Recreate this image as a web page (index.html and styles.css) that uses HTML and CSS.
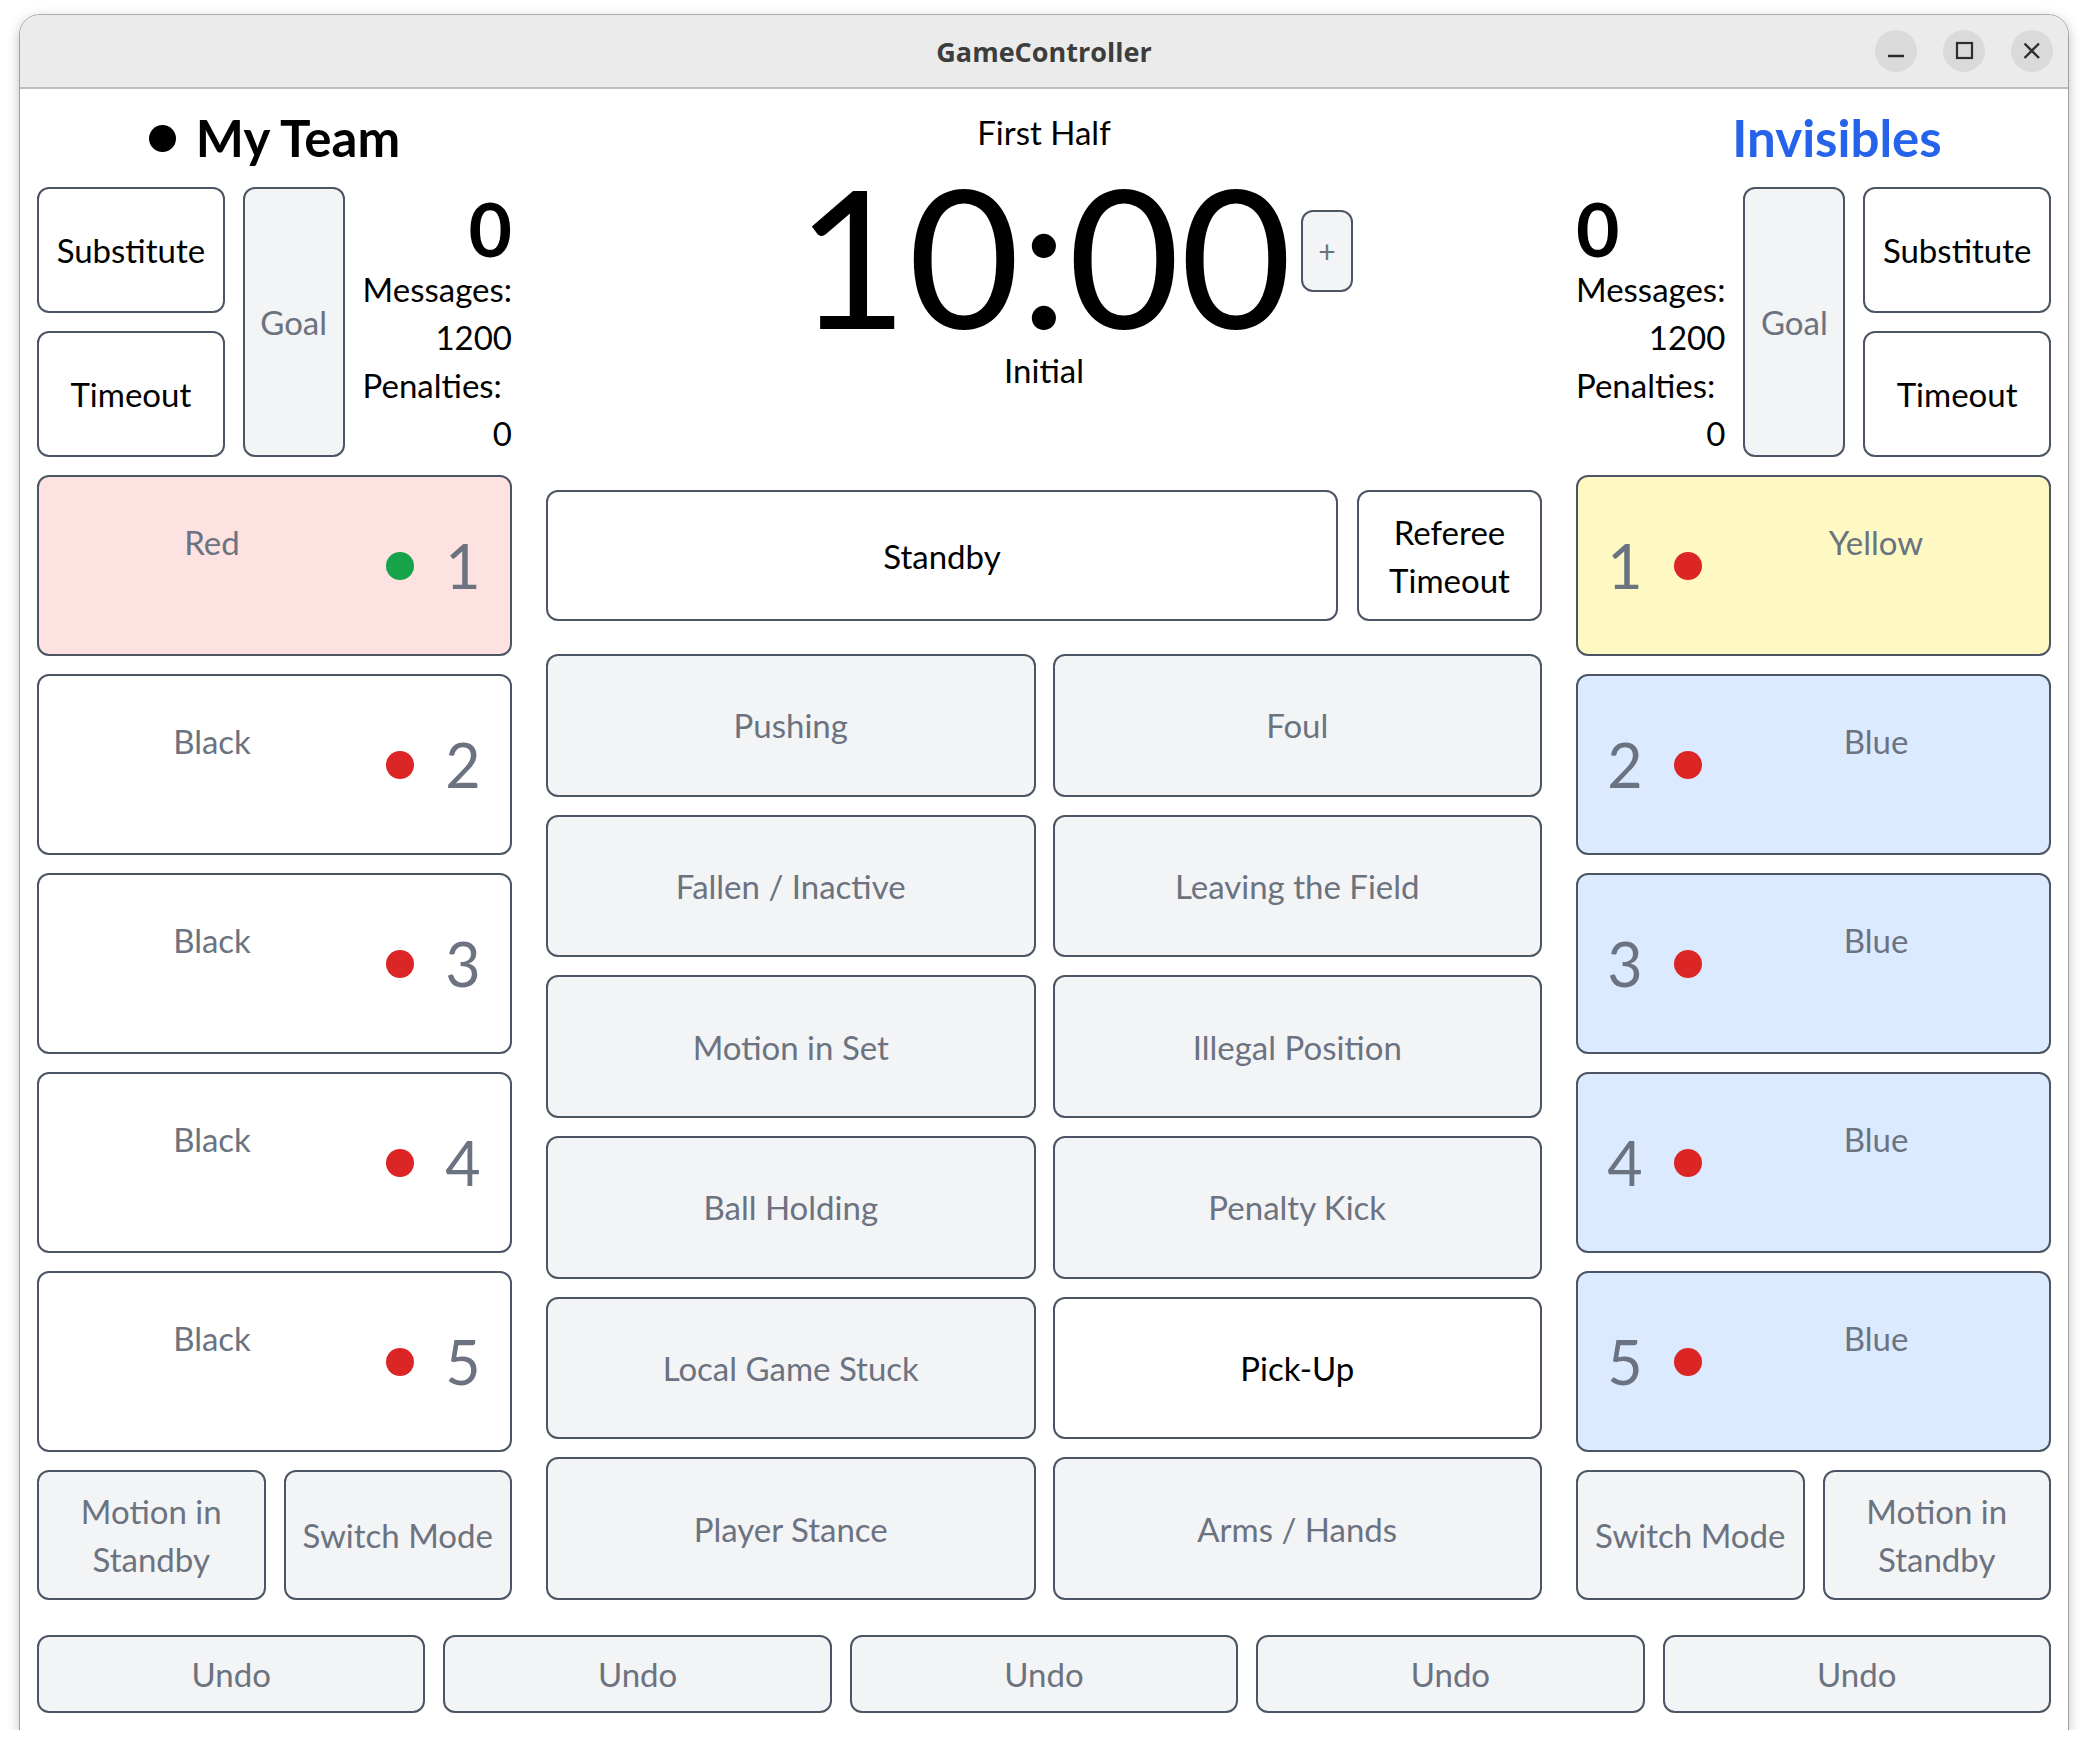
FILE: index.html
```
<!DOCTYPE html>
<html lang="en">
<head>
<meta charset="utf-8">
<title>GameController</title>
<link rel="stylesheet" href="styles.css">
</head>
<body>
<div class="window">
  <header class="titlebar">
    <div class="title">GameController</div>
    <div class="controls">
      <span class="ctl"><svg width="42" height="42" viewBox="0 0 42 42"><line x1="13" y1="26" x2="29" y2="26" stroke="#2e2e2e" stroke-width="2.4"/></svg></span>
      <span class="ctl"><svg width="42" height="42" viewBox="0 0 42 42"><rect x="14" y="13" width="15" height="15" fill="none" stroke="#2e2e2e" stroke-width="2.2"/></svg></span>
      <span class="ctl"><svg width="42" height="42" viewBox="0 0 42 42"><path d="M13.5 13.5 L28 28 M28 13.5 L13.5 28" stroke="#2e2e2e" stroke-width="2.4" fill="none"/></svg></span>
    </div>
  </header>

  <main class="content">
    <div class="main">
      <section class="team team-left">
        <div class="team-name"><span class="team-dot"></span><span>My Team</span></div>
        <div class="team-top">
          <div class="side-btns">
            <div class="btn on">Substitute</div>
            <div class="btn on">Timeout</div>
          </div>
          <div class="btn off goal">Goal</div>
          <div class="stats">
            <div class="stats-inner">
              <div class="score">0</div>
              <div class="stat-label">Messages:</div>
              <div class="stat-value">1200</div>
              <div class="stat-label">Penalties:</div>
              <div class="stat-value">0</div>
            </div>
          </div>
        </div>
        <div class="players">
          <div class="player red"><div class="p-label"><span>Red</span><span>&nbsp;</span></div><span class="p-dot ok"></span><span class="p-num">1</span></div>
          <div class="player"><div class="p-label"><span>Black</span><span>&nbsp;</span></div><span class="p-dot bad"></span><span class="p-num">2</span></div>
          <div class="player"><div class="p-label"><span>Black</span><span>&nbsp;</span></div><span class="p-dot bad"></span><span class="p-num">3</span></div>
          <div class="player"><div class="p-label"><span>Black</span><span>&nbsp;</span></div><span class="p-dot bad"></span><span class="p-num">4</span></div>
          <div class="player"><div class="p-label"><span>Black</span><span>&nbsp;</span></div><span class="p-dot bad"></span><span class="p-num">5</span></div>
        </div>
        <div class="team-bottom">
          <div class="btn off">Motion in<br>Standby</div>
          <div class="btn off">Switch Mode</div>
        </div>
      </section>

      <section class="center">
        <div class="clock-area">
          <div class="half">First Half</div>
          <div class="clock-row">
            <div class="clock">10:00</div>
            <div class="btn off plus">+</div>
          </div>
          <div class="state">Initial</div>
        </div>
        <div class="standby-row">
          <div class="btn on standby">Standby</div>
          <div class="btn on ref-timeout">Referee<br>Timeout</div>
        </div>
        <div class="penalties">
          <div class="btn off">Pushing</div>
          <div class="btn off">Foul</div>
          <div class="btn off">Fallen / Inactive</div>
          <div class="btn off">Leaving the Field</div>
          <div class="btn off">Motion in Set</div>
          <div class="btn off">Illegal Position</div>
          <div class="btn off">Ball Holding</div>
          <div class="btn off">Penalty Kick</div>
          <div class="btn off">Local Game Stuck</div>
          <div class="btn on">Pick-Up</div>
          <div class="btn off">Player Stance</div>
          <div class="btn off">Arms / Hands</div>
        </div>
      </section>

      <section class="team team-right">
        <div class="team-name"><span class="team-dot"></span><span>Invisibles</span></div>
        <div class="team-top">
          <div class="stats">
            <div class="stats-inner">
              <div class="score">0</div>
              <div class="stat-label">Messages:</div>
              <div class="stat-value">1200</div>
              <div class="stat-label">Penalties:</div>
              <div class="stat-value">0</div>
            </div>
          </div>
          <div class="btn off goal">Goal</div>
          <div class="side-btns">
            <div class="btn on">Substitute</div>
            <div class="btn on">Timeout</div>
          </div>
        </div>
        <div class="players">
          <div class="player yellow"><span class="p-num">1</span><span class="p-dot bad"></span><div class="p-label"><span>Yellow</span><span>&nbsp;</span></div></div>
          <div class="player blue"><span class="p-num">2</span><span class="p-dot bad"></span><div class="p-label"><span>Blue</span><span>&nbsp;</span></div></div>
          <div class="player blue"><span class="p-num">3</span><span class="p-dot bad"></span><div class="p-label"><span>Blue</span><span>&nbsp;</span></div></div>
          <div class="player blue"><span class="p-num">4</span><span class="p-dot bad"></span><div class="p-label"><span>Blue</span><span>&nbsp;</span></div></div>
          <div class="player blue"><span class="p-num">5</span><span class="p-dot bad"></span><div class="p-label"><span>Blue</span><span>&nbsp;</span></div></div>
        </div>
        <div class="team-bottom">
          <div class="btn off">Switch Mode</div>
          <div class="btn off">Motion in<br>Standby</div>
        </div>
      </section>
    </div>

    <div class="undo-row">
      <div class="btn off">Undo</div>
      <div class="btn off">Undo</div>
      <div class="btn off">Undo</div>
      <div class="btn off">Undo</div>
      <div class="btn off">Undo</div>
    </div>
  </main>
</div>
</body>
</html>
```
FILE: styles.css
```
* { box-sizing: border-box; }

body {
  margin: 0;
  background: #ffffff;
  font-family: "Lato", "Noto Sans", sans-serif;
  color: #000;
}

.window {
  margin: 15px 0 0 20px;
  width: 2048px;
  height: 1715px;
  background: #fff;
  border-radius: 20px 20px 0 0;
  box-shadow: 0 0 0 1px rgba(0, 0, 0, 0.28), 0 4px 14px rgba(0, 0, 0, 0.28);
  display: flex;
  flex-direction: column;
  overflow: hidden;
}

/* title bar */
.titlebar {
  height: 74px;
  flex: none;
  background: #ebebeb;
  border-bottom: 2px solid #bdbdbd;
  display: grid;
  grid-template-columns: 1fr auto 1fr;
  align-items: center;
  padding: 0 15px;
}
.title {
  grid-column: 2;
  font-family: "Open Sans", "Lato", sans-serif;
  font-weight: 700;
  font-size: 27px;
  color: #3d3d3d;
}
.controls {
  grid-column: 3;
  justify-self: end;
  display: flex;
  gap: 26px;
}
.ctl {
  width: 42px;
  height: 42px;
  border-radius: 50%;
  background: #dadada;
  display: flex;
}

/* content */
.content {
  flex: 1;
  padding: 0 17px 17px;
  display: flex;
  flex-direction: column;
}
.main {
  flex: 1;
  display: grid;
  grid-template-columns: 475px 1fr 475px;
  column-gap: 34px;
}
.undo-row {
  margin-top: 35px;
  height: 78px;
  display: grid;
  grid-template-columns: repeat(5, 1fr);
  gap: 18px;
}

/* buttons */
.btn {
  border: 2px solid #4b5563;
  border-radius: 12px;
  display: flex;
  align-items: center;
  justify-content: center;
  text-align: center;
  font-size: 33px;
  line-height: 48px;
}
.btn.on { background: #ffffff; color: #000; }
.btn.off { background: #f3f4f6; color: #6b7280; }

/* teams */
.team {
  display: flex;
  flex-direction: column;
}
.team-name {
  height: 98px;
  display: flex;
  align-items: center;
  justify-content: center;
  gap: 20px;
  font-weight: 700;
  font-size: 51px;
  line-height: 60px;
}
.team-dot {
  width: 27px;
  height: 27px;
  border-radius: 50%;
  background: #000;
}
.team-right .team-name { color: #2563eb; }
.team-right .team-dot { visibility: hidden; }

.team-top {
  height: 270px;
  display: flex;
  gap: 18px;
}
.side-btns {
  width: 188px;
  display: flex;
  flex-direction: column;
  gap: 18px;
}
.side-btns .btn { flex: 1; }
.goal { width: 102px; }

.stats {
  flex: 1;
  display: flex;
  align-items: flex-end;
  font-size: 33px;
  line-height: 48px;
}
.team-left .stats { justify-content: flex-end; }
.team-right .stats { justify-content: flex-start; }
.stats-inner {
  display: flex;
  flex-direction: column;
}
.score {
  font-weight: 700;
  font-size: 75px;
  line-height: 74px;
  padding-top: 4px;
}
.team-left .score { align-self: flex-end; }
.team-right .score { align-self: flex-start; }
.stat-label { align-self: flex-start; }
.stat-value { align-self: flex-end; }

/* players */
.players {
  margin-top: 18px;
  display: flex;
  flex-direction: column;
  gap: 18px;
}
.player {
  height: 181px;
  border: 2px solid #4b5563;
  border-radius: 12px;
  background: #fff;
  display: flex;
  align-items: center;
  color: #6b7280;
}
.team-left .player { padding: 0 24px 0 17px; }
.team-right .player { padding: 0 17px 0 24px; }
.player.red { background: #fee2e2; }
.player.yellow { background: #fef9c3; }
.player.blue { background: #dbeafe; }

.p-label {
  flex: 1;
  display: flex;
  flex-direction: column;
  align-items: center;
  font-size: 33px;
  line-height: 48px;
}
.p-dot {
  width: 28px;
  height: 28px;
  border-radius: 50%;
  flex: none;
}
.p-dot.ok { background: #16a34a; }
.p-dot.bad { background: #dc2626; }
.p-num {
  width: 46px;
  text-align: center;
  font-size: 61px;
  line-height: 70px;
  flex: none;
}
.team-left .p-dot { margin-left: 18px; }
.team-left .p-num { margin-left: 26px; }
.team-right .p-dot { margin-left: 26px; margin-right: 18px; }

.team-bottom {
  margin-top: 18px;
  flex: 1;
  display: grid;
  grid-template-columns: 1fr 1fr;
  gap: 18px;
}

/* center */
.center {
  display: flex;
  flex-direction: column;
}
.clock-area {
  height: 401px;
  padding-top: 19px;
  display: flex;
  flex-direction: column;
  align-items: center;
  font-size: 33px;
  line-height: 48px;
}
.clock-row {
  margin-top: 4px;
  width: 100%;
  height: 190px;
  display: grid;
  grid-template-columns: 1fr auto 1fr;
}
.clock {
  grid-column: 2;
  font-size: 193px;
  line-height: 190px;
}
.plus {
  grid-column: 3;
  justify-self: start;
  align-self: start;
  margin-top: 50px;
  margin-left: 9px;
  width: 52px;
  height: 82px;
  font-size: 30px;
}
.state { margin-top: -4px; }

.standby-row {
  height: 131px;
  display: flex;
  gap: 19px;
}
.standby { flex: 1; }
.ref-timeout { width: 185px; }

.penalties {
  margin-top: 33px;
  flex: 1;
  min-height: 0;
  display: grid;
  grid-template-columns: 1fr 1fr;
  grid-template-rows: repeat(6, 1fr);
  column-gap: 17px;
  row-gap: 18px;
}
```
